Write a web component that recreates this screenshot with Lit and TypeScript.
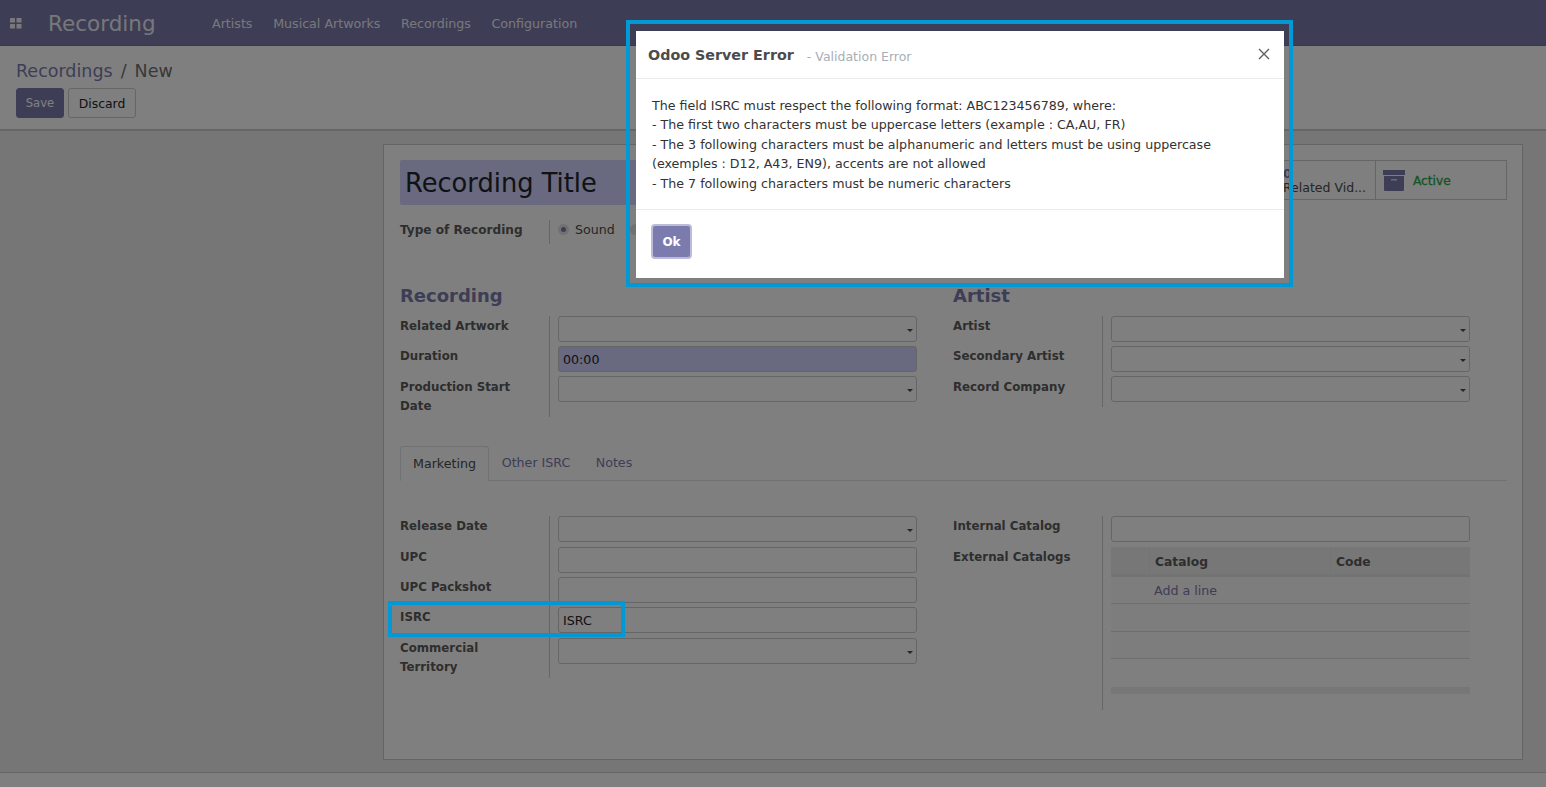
import { LitElement, css, html, nothing } from 'lit';
import { customElement } from 'lit/decorators.js';

type Field = {
  label: string;
  value?: string;
  select?: boolean;
  required?: boolean;
};

const MENU = ['Artists', 'Musical Artworks', 'Recordings', 'Configuration'];

const RECORDING_FIELDS: Field[] = [
  { label: 'Related Artwork', select: true },
  { label: 'Duration', value: '00:00', required: true },
  { label: 'Production Start Date', select: true },
];

const ARTIST_FIELDS: Field[] = [
  { label: 'Artist', select: true },
  { label: 'Secondary Artist', select: true },
  { label: 'Record Company', select: true },
];

const MARKETING_FIELDS: Field[] = [
  { label: 'Release Date', select: true },
  { label: 'UPC' },
  { label: 'UPC Packshot' },
  { label: 'ISRC', value: 'ISRC' },
  { label: 'Commercial Territory', select: true },
];

const ERROR_LINES = [
  'The field ISRC must respect the following format: ABC123456789, where:',
  '- The first two characters must be uppercase letters (example : CA,AU, FR)',
  '- The 3 following characters must be alphanumeric and letters must be using uppercase (exemples : D12, A43, EN9), accents are not allowed',
  '- The 7 following characters must be numeric characters',
];

@customElement('app-root')
export class AppRoot extends LitElement {
  private renderField(field: Field) {
    return html`
      <div class="field-label">${field.label}</div>
      <div class="field-value">
        <div class="input ${field.required ? 'required' : ''}">
          ${field.value ?? nothing}
          ${field.select ? html`<span class="caret"></span>` : nothing}
        </div>
      </div>
    `;
  }

  render() {
    return html`
      <div class="page">
        <header class="navbar">
          <svg class="apps" viewBox="0 0 12 11" width="12" height="11">
            <rect x="0" y="0" width="5" height="4.5" rx="0.6"></rect>
            <rect x="6.5" y="0" width="5" height="4.5" rx="0.6"></rect>
            <rect x="0" y="6" width="5" height="4.5" rx="0.6"></rect>
            <rect x="6.5" y="6" width="5" height="4.5" rx="0.6"></rect>
          </svg>
          <span class="brand">Recording</span>
          <nav class="menu">${MENU.map((item) => html`<a>${item}</a>`)}</nav>
        </header>

        <section class="control-panel">
          <div class="breadcrumb"><a>Recordings</a><span>/</span><span>New</span></div>
          <div class="actions">
            <button class="btn primary" type="button">Save</button>
            <button class="btn discard" type="button">Discard</button>
          </div>
        </section>

        <main class="content">
          <div class="sheet">
            <div class="sheet-top">
              <div class="title-input">Recording Title</div>
              <div class="stats">
                <div class="stat">
                  <span class="stat-num">0</span>
                  <span class="stat-text">Related Vid...</span>
                </div>
                <div class="stat active">
                  <svg viewBox="0 0 22 21" width="22" height="21">
                    <rect x="0" y="0" width="22" height="5"></rect>
                    <path d="M1 6h20v14a1 1 0 0 1-1 1H2a1 1 0 0 1-1-1z"></path>
                    <rect class="slot" x="8" y="9" width="6" height="1.5"></rect>
                  </svg>
                  <span>Active</span>
                </div>
              </div>
            </div>

            <div class="type-row">
              <div class="field-label">Type of Recording</div>
              <div class="radios">
                <span class="radio checked"></span><span class="radio-text">Sound</span>
                <span class="radio"></span>
              </div>
            </div>

            <div class="columns groups">
              <div>
                <h2>Recording</h2>
                <div class="fields">${RECORDING_FIELDS.map((f) => this.renderField(f))}</div>
              </div>
              <div>
                <h2>Artist</h2>
                <div class="fields">${ARTIST_FIELDS.map((f) => this.renderField(f))}</div>
              </div>
            </div>

            <div class="tabs">
              <a class="tab current">Marketing</a>
              <a class="tab">Other ISRC</a>
              <a class="tab">Notes</a>
            </div>

            <div class="columns tab-body">
              <div class="fields">${MARKETING_FIELDS.map((f) => this.renderField(f))}</div>
              <div class="fields">
                ${this.renderField({ label: 'Internal Catalog' })}
                <div class="field-label tall">External Catalogs</div>
                <div class="field-value tall">
                  <div class="table">
                    <div class="thead">
                      <span class="th handle"></span>
                      <span class="th catalog">Catalog</span>
                      <span class="th">Code</span>
                    </div>
                    <div class="tr add"><a>Add a line</a></div>
                    <div class="tr"></div>
                    <div class="tr"></div>
                    <div class="tfoot"></div>
                  </div>
                </div>
              </div>
            </div>
          </div>
        </main>
        <footer class="strip"></footer>
      </div>

      <div class="backdrop"></div>

      <div class="modal" role="dialog">
        <div class="modal-head">
          <span class="modal-title">Odoo Server Error</span>
          <span class="modal-sub">- Validation Error</span>
          <svg class="close" viewBox="0 0 12 12" width="12" height="12">
            <path d="M1 1l10 10M11 1L1 11"></path>
          </svg>
        </div>
        <div class="modal-body">${ERROR_LINES.map((line) => html`<div>${line}</div>`)}</div>
        <div class="modal-foot"><button class="ok" type="button">Ok</button></div>
      </div>

      <div class="callout callout-modal"></div>
      <div class="callout callout-isrc"></div>
    `;
  }

  static styles = css`
    :host {
      display: block;
      position: relative;
      height: 787px;
      overflow: hidden;
      font: 12.65px/19.5px 'DejaVu Sans', sans-serif;
      color: #4c4c4c;
    }

    a {
      cursor: pointer;
    }

    .page {
      display: flex;
      flex-direction: column;
      height: 787px;
      background: #fff;
    }

    .navbar {
      flex: none;
      display: flex;
      align-items: center;
      height: 46px;
      box-sizing: border-box;
      padding: 2px 0 0 10px;
      background: #7c7bad;
      border-bottom: 1px solid #6f6ea0;
      color: rgba(255, 255, 255, 0.9);
    }

    .apps {
      fill: currentColor;
      margin-right: 26px;
    }

    .brand {
      font-size: 21.5px;
      width: 164px;
    }

    .menu {
      display: flex;
      gap: 20.7px;
      font-size: 12.65px;
    }

    .control-panel {
      flex: none;
      height: 85px;
      box-sizing: border-box;
      padding: 14px 16px 0;
      border-bottom: 2px solid #ccc;
    }

    .breadcrumb {
      display: flex;
      gap: 8px;
      font-size: 17.5px;
      line-height: 22px;
      color: #707070;
    }

    .breadcrumb a {
      color: #7c7bad;
    }

    .actions {
      display: flex;
      gap: 4px;
      margin-top: 6px;
    }

    .btn {
      height: 30px;
      padding: 0;
      font: 12.4px 'DejaVu Sans', sans-serif;
      color: #212529;
      background: #fff;
      border: 1px solid #ccc;
      border-radius: 3px;
    }

    .btn.primary {
      width: 48px;
      font-size: 11.6px;
      background: #7c7bad;
      border-color: #7c7bad;
      color: #fff;
    }

    .btn.discard {
      width: 68px;
    }

    .content {
      flex: 1;
      min-height: 0;
      padding: 13px 23px 0 383px;
      background: repeating-conic-gradient(#e8e8e8 0 25%, #f0f0f0 0 50%) 0 0 / 2px 2px;
    }

    .strip {
      flex: none;
      height: 14px;
      background: #fff;
      border-top: 1px solid #ccc;
    }

    .sheet {
      box-sizing: border-box;
      height: 616px;
      padding: 15px 15px 16px 16px;
      background: #fff;
      border: 1px solid #c8c8c8;
    }

    .sheet-top {
      display: flex;
      justify-content: space-between;
      align-items: flex-start;
    }

    .title-input {
      width: 760px;
      height: 45px;
      box-sizing: border-box;
      padding-left: 5px;
      font-size: 25.7px;
      line-height: 47px;
      color: #212529;
      background: #d2d2ff;
      border-radius: 2px;
    }

    .stats {
      display: flex;
      height: 40px;
      box-sizing: border-box;
      border: 1px solid #ccc;
    }

    .stat {
      display: flex;
      flex-direction: column;
      justify-content: center;
      box-sizing: border-box;
      width: 132px;
      padding: 1px 0 0 40px;
      font-size: 12.5px;
      line-height: 14px;
      white-space: nowrap;
    }

    .stat-num {
      color: #7c7bad;
      font-weight: 700;
    }

    .stat.active {
      flex-direction: row;
      justify-content: flex-start;
      align-items: center;
      gap: 8px;
      width: 131px;
      padding: 1px 0 0 7px;
      border-left: 1px solid #ccc;
      font-size: 12.2px;
      -webkit-text-stroke: 0.3px #28a745;
      color: #28a745;
    }

    .stat.active svg {
      fill: #7c7bad;
    }

    .stat.active .slot {
      fill: #d8d8e8;
    }

    .type-row {
      display: grid;
      grid-template-columns: 150px 1fr;
      margin-top: 15px;
    }

    .type-row .field-label {
      height: 24px;
      font-size: 12.1px;
    }

    .radios {
      display: flex;
      align-items: flex-start;
      padding-left: 8px;
    }

    .radio {
      flex: none;
      width: 11px;
      height: 11px;
      margin-top: 4px;
      margin-right: 6px;
      border-radius: 50%;
      background: #e2e2e8;
      display: flex;
      align-items: center;
      justify-content: center;
    }

    .radio.checked::after {
      content: '';
      width: 5px;
      height: 5px;
      border-radius: 50%;
      background: #7c7bad;
    }

    .radio-text {
      margin-right: 15px;
    }

    .columns {
      display: grid;
      grid-template-columns: 517px 517px;
      column-gap: 36px;
    }

    .groups {
      margin-top: 40px;
    }

    h2 {
      margin: 0 0 7.6px;
      font-size: 18px;
      line-height: 24px;
      font-weight: 700;
      color: #7c7bad;
    }

    .fields {
      display: grid;
      grid-template-columns: 150px 1fr;
      align-content: start;
    }

    .field-label {
      box-sizing: border-box;
      padding: 1.4px 12px 0 0;
      font-weight: 700;
      color: #5c5c5c;
      font-size: 11.8px;
      border-right: 1px solid #ccc;
    }

    .tab-body .field-label {
      padding-top: 1px;
    }

    .field-value {
      box-sizing: border-box;
      padding: 0 0 4.4px 8px;
    }

    .input {
      position: relative;
      box-sizing: border-box;
      height: 26px;
      padding-left: 4px;
      line-height: 25px;
      color: #212529;
      border: 1px solid #ccc;
      border-radius: 3px;
    }

    .input.required {
      background: #d2d2ff;
    }

    .caret {
      position: absolute;
      right: 3px;
      top: 12px;
      border: 3px solid transparent;
      border-top-color: #4c4c4c;
      border-bottom: 0;
    }

    .tabs {
      display: flex;
      align-items: flex-end;
      height: 35px;
      margin-top: 28px;
      border-bottom: 1px solid #dee2e6;
    }

    .tab {
      box-sizing: border-box;
      height: 34px;
      padding: 7px 12.7px 0;
      color: #7c7bad;
    }

    .tab.current {
      height: 35px;
      margin-bottom: -1px;
      padding-left: 12px;
      padding-right: 12px;
      color: #4c4c4c;
      background: #fff;
      border: 1px solid #dee2e6;
      border-bottom-color: #fff;
      border-radius: 3px 3px 0 0;
    }

    .tab-body {
      margin-top: 35.4px;
    }

    .tall {
      min-height: 163px;
    }

    .table {
      display: flex;
      flex-direction: column;
    }

    .thead {
      display: grid;
      grid-template-columns: 39px 181px 1fr;
      height: 30px;
      background: #eee;
      border-bottom: 3px solid #e6e6e6;
      box-sizing: border-box;
      font-weight: 700;
      font-size: 12.3px;
      color: #5c5c5c;
    }

    .th {
      padding-left: 5px;
      line-height: 30px;
    }

    .th.handle,
    .th.catalog {
      border-right: 1px solid #e8e8e8;
    }

    .tr {
      height: 27.6px;
      box-sizing: border-box;
      border-bottom: 1px solid #ddd;
      background: #fafafa;
    }

    .tr.add {
      padding-left: 43px;
      line-height: 27px;
      color: #7c7bad;
    }

    .tfoot {
      height: 7px;
      margin-top: 28px;
      background: #eee;
    }

    .backdrop {
      position: absolute;
      inset: 0;
      background: rgba(0, 0, 0, 0.5);
    }

    .modal {
      position: absolute;
      left: 636px;
      top: 31px;
      width: 648px;
      height: 247px;
      box-sizing: border-box;
      display: flex;
      flex-direction: column;
      background: #fff;
    }

    .modal-head {
      position: relative;
      flex: none;
      height: 48px;
      box-sizing: border-box;
      display: flex;
      align-items: center;
      padding: 2px 0 0 12px;
      border-bottom: 1px solid #e9ecef;
    }

    .modal-title {
      font-size: 14.3px;
      font-weight: 700;
      color: #4c4c4c;
      margin-right: 13px;
    }

    .modal-sub {
      font-size: 12.5px;
      color: #a8aeb6;
      margin-top: 2px;
    }

    .close {
      position: absolute;
      right: 14px;
      top: 17px;
      fill: none;
      stroke: #5f5f5f;
      stroke-width: 1.4;
    }

    .modal-body {
      flex: none;
      height: 131px;
      box-sizing: border-box;
      padding: 16.6px 70px 0 16px;
      border-bottom: 1px solid #e9ecef;
      color: #333;
    }

    .modal-foot {
      flex: 1;
      padding: 14px 15px 0;
    }

    .ok {
      width: 41px;
      height: 35px;
      padding: 0;
      font: 700 12px 'DejaVu Sans', sans-serif;
      color: #fff;
      background: #7c7bad;
      border: 2px solid #bdbcd8;
      border-radius: 4px;
    }

    .callout {
      position: absolute;
      box-sizing: border-box;
      border: 4px solid #0099d6;
      pointer-events: none;
    }

    .callout-modal {
      left: 626px;
      top: 20px;
      width: 667px;
      height: 267px;
    }

    .callout-isrc {
      left: 388px;
      top: 601px;
      width: 237px;
      height: 36px;
    }
  `;
}

declare global {
  interface HTMLElementTagNameMap {
    'app-root': AppRoot;
  }
}
